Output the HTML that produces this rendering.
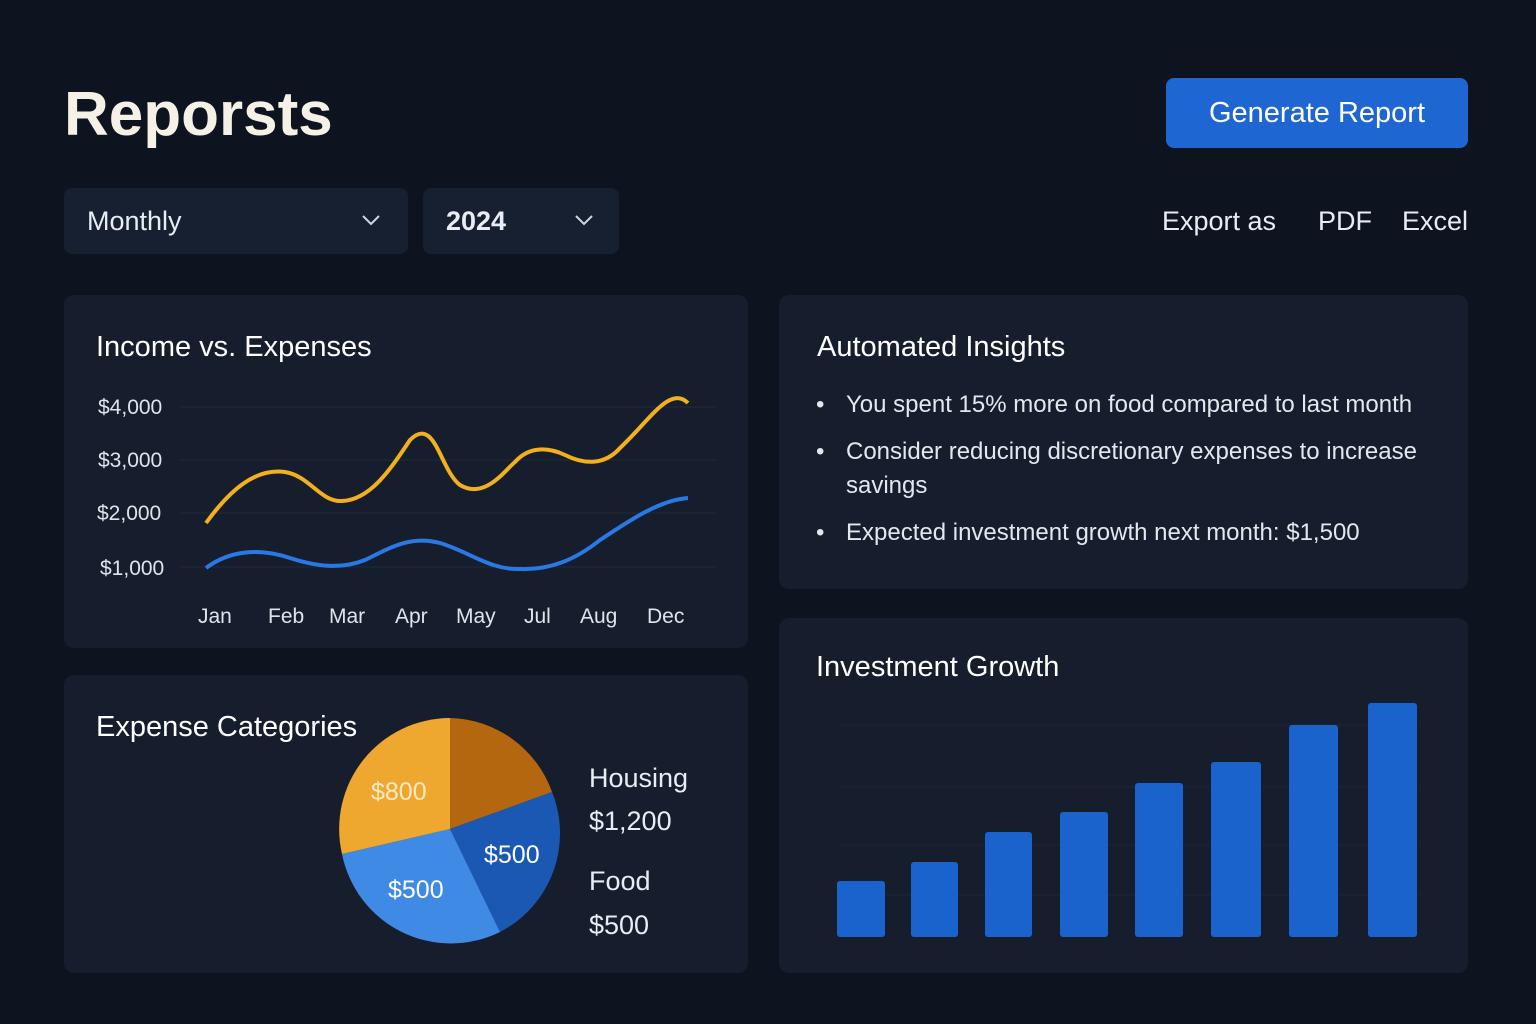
<!DOCTYPE html>
<html><head><meta charset="utf-8"><style>
*{margin:0;padding:0;box-sizing:border-box}
body{width:1536px;height:1024px;background:#0e1320;font-family:"Liberation Sans",sans-serif;color:#e8ecf3;position:relative;overflow:hidden}
.a{position:absolute}
.card{position:absolute;background:#161d2c;border-radius:10px}
.sel{position:absolute;background:#172031;border-radius:8px;height:66px;top:188px;font-size:27px;line-height:66px;padding-left:23px}
</style></head><body>
<div class="a" style="left:64px;top:79px;font-size:62px;font-weight:bold;color:#f6f1e6">Reporsts</div>
<div class="a" style="left:1166px;top:78px;width:302px;height:70px;background:#1e66d2;border-radius:8px;font-size:29px;text-align:center;line-height:70px;color:#fff">Generate Report</div>
<div class="sel" style="left:64px;width:344px">Monthly<svg class="a" style="left:298px;top:26px" width="18" height="12"><path d="M1 2l8 8 8-8" stroke="#cfd5e0" stroke-width="2" fill="none"/></svg></div>
<div class="sel" style="left:423px;width:196px;font-weight:bold">2024<svg class="a" style="left:152px;top:26px" width="18" height="12"><path d="M1 2l8 8 8-8" stroke="#cfd5e0" stroke-width="2" fill="none"/></svg></div>
<div class="a" style="left:1162px;top:206px;font-size:27px">Export as</div>
<div class="a" style="left:1318px;top:206px;font-size:27px">PDF</div>
<div class="a" style="left:1402px;top:206px;font-size:27px">Excel</div>

<div class="card" style="left:64px;top:295px;width:684px;height:353px"></div>
<div class="card" style="left:779px;top:295px;width:689px;height:294px"></div>
<div class="card" style="left:64px;top:675px;width:684px;height:298px"></div>
<div class="card" style="left:779px;top:618px;width:689px;height:355px"></div>

<div class="a" style="left:96px;top:331px;font-size:29px;color:#fff">Income vs. Expenses</div>
<svg class="a" style="left:0;top:0" width="760" height="660">
<g stroke="#222a3a" stroke-width="1"><line x1="180" y1="407" x2="715" y2="407"/><line x1="180" y1="460" x2="715" y2="460"/><line x1="180" y1="513" x2="715" y2="513"/><line x1="180" y1="567" x2="715" y2="567"/></g>
<g font-size="21" fill="#dfe4ec" font-family="Liberation Sans"><text x="98" y="414">$4,000</text><text x="98" y="467">$3,000</text><text x="97" y="520">$2,000</text><text x="100" y="575">$1,000</text>
<text x="198" y="623">Jan</text><text x="268" y="623">Feb</text><text x="329" y="623">Mar</text><text x="395" y="623">Apr</text><text x="456" y="623">May</text><text x="524" y="623">Jul</text><text x="580" y="623">Aug</text><text x="647" y="623">Dec</text></g>
<path d="M206 523C230 490 255 468 285 472C310 476 320 502 342 501C370 500 390 470 410 440C435 415 440 470 460 485C485 500 505 470 515 462C530 445 550 448 565 455C585 465 605 465 620 448C650 420 670 385 688 403" stroke="#f2b01e" stroke-width="4" fill="none"/>
<path d="M206 568C230 550 260 548 290 558C315 566 340 570 365 560C390 548 410 535 440 543C470 552 490 570 520 569C550 570 575 560 600 540C630 520 660 500 688 498" stroke="#2a78e4" stroke-width="4" fill="none"/>
</svg>

<div class="a" style="left:817px;top:331px;font-size:29px;color:#fff">Automated Insights</div>
<div class="a" style="left:816px;top:388px;font-size:24px;line-height:34px;color:#e3e8ef;width:640px">
<div style="padding-left:30px;position:relative"><span class="a" style="left:0">•</span>You spent 15% more on food compared to last month</div>
<div style="padding-left:30px;position:relative;margin-top:13px"><span class="a" style="left:0">•</span>Consider reducing discretionary expenses to increase savings</div>
<div style="padding-left:30px;position:relative;margin-top:13px"><span class="a" style="left:0">•</span>Expected investment growth next month: $1,500</div>
</div>

<div class="a" style="left:96px;top:711px;font-size:29px;color:#fff">Expense Categories</div>
<svg class="a" style="left:0;top:0" width="760" height="1000">
<path d="M450 829L450 718A111 111 0 0 1 552 792Z" fill="#b5670f"/>
<path d="M450 829L552 792A111 111 0 0 1 500 932Z" fill="#1b58b4"/>
<path d="M450 829L500 932A111 111 0 0 1 342 854Z" fill="#3f8ae4"/>
<path d="M450 829L342 854A111 111 0 0 1 450 718Z" fill="#eea830"/>
<g font-family="Liberation Sans" font-size="25" fill="#fff"><text x="371" y="800" fill="#fbe9c6">$800</text><text x="484" y="863">$500</text><text x="388" y="898">$500</text></g>
<g font-family="Liberation Sans" font-size="27" fill="#e8ecf3"><text x="589" y="787">Housing</text><text x="589" y="830">$1,200</text><text x="589" y="890">Food</text><text x="589" y="934">$500</text></g>
</svg>

<div class="a" style="left:816px;top:651px;font-size:29px;color:#fff">Investment Growth</div>
<svg class="a" style="left:0;top:0" width="1536" height="1000">
<g stroke="#1f2737"><line x1="840" y1="725" x2="1420" y2="725"/><line x1="840" y1="787" x2="1420" y2="787"/><line x1="840" y1="845" x2="1420" y2="845"/><line x1="840" y1="895" x2="1420" y2="895"/></g>
<g fill="#1b63cc">
<rect x="837" y="881" width="48" height="56" rx="3"/><rect x="911" y="862" width="47" height="75" rx="3"/><rect x="985" y="832" width="47" height="105" rx="3"/><rect x="1060" y="812" width="48" height="125" rx="3"/><rect x="1135" y="783" width="48" height="154" rx="3"/><rect x="1211" y="762" width="50" height="175" rx="3"/><rect x="1289" y="725" width="49" height="212" rx="3"/><rect x="1368" y="703" width="49" height="234" rx="3"/></g>
</svg>
</body></html>
